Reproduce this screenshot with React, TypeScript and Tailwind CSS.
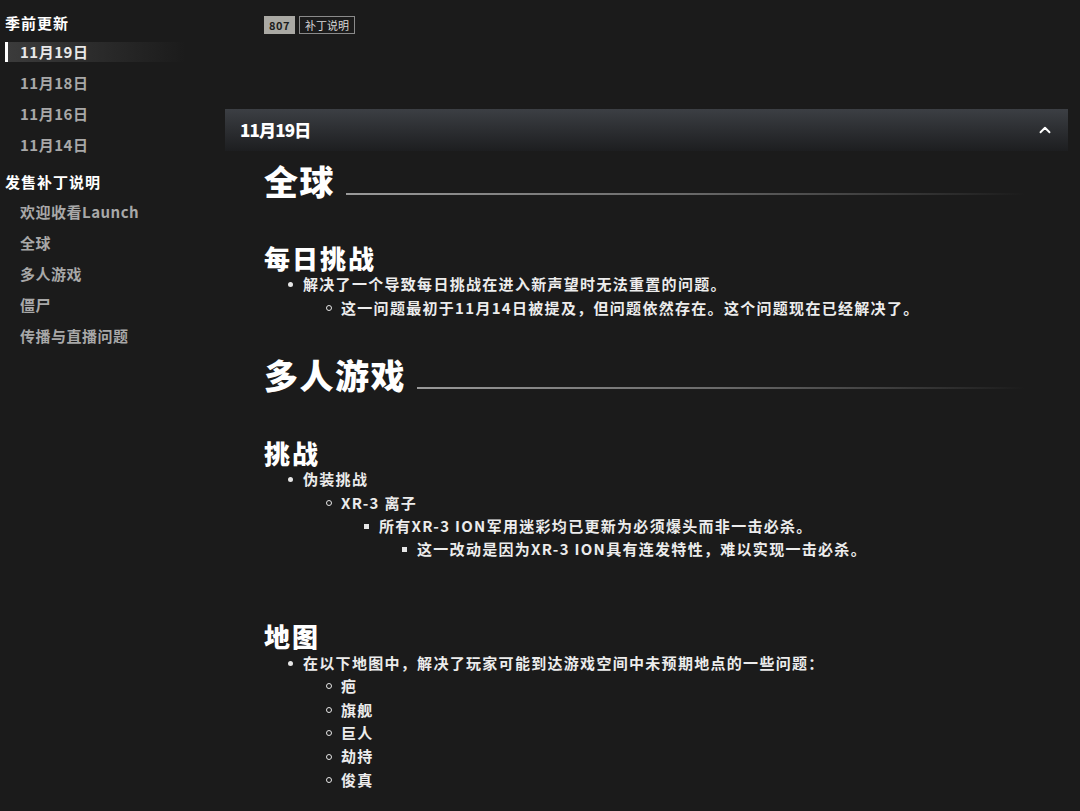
import React from "react";
import { ChevronUp } from "lucide-react";

const font = { fontFamily: '"Noto Sans CJK SC", "Noto Sans", sans-serif' };

const seasonDates = ["11月19日", "11月18日", "11月16日", "11月14日"];
const launchLinks = ["欢迎收看Launch", "全球", "多人游戏", "僵尸", "传播与直播问题"];

const Bullet = ({ kind }: { kind: "disc" | "circle" | "square" }) => {
  if (kind === "disc")
    return <span className="inline-block w-[5px] h-[5px] rounded-full bg-[#e6e6e6]" />;
  if (kind === "circle")
    return <span className="inline-block w-[6px] h-[6px] rounded-full border border-[#e6e6e6]" />;
  return <span className="inline-block w-[5px] h-[5px] bg-[#e6e6e6]" />;
};

const Item = ({
  indent,
  kind,
  children,
}: {
  indent: number;
  kind: "disc" | "circle" | "square";
  children: React.ReactNode;
}) => (
  <div className="flex items-center h-[23.4px]" style={{ paddingLeft: indent }}>
    <span className="w-[15px] flex items-center">
      <Bullet kind={kind} />
    </span>
    <span className="text-[15px] tracking-[1.3px] font-semibold text-[#ececec] whitespace-nowrap">
      {children}
    </span>
  </div>
);

const SectionTitle = ({ title }: { title: string }) => (
  <div className="flex items-end gap-[11px]">
    <h1 className="text-[34px] leading-[40px] font-black text-white tracking-[1.5px]">{title}</h1>
    <div className="flex-1 mr-[55px] mb-[6px] h-[2px] bg-gradient-to-r from-[#9a9a9a] via-[#6a6a6a] to-transparent" />
  </div>
);

const SubTitle = ({ title }: { title: string }) => (
  <h2 className="text-[26px] leading-[30px] font-black text-white tracking-[2px]">{title}</h2>
);

export default function App() {
  return (
    <div className="flex w-full h-[811px] bg-[#1b1b1b] overflow-hidden" style={font}>
      {/* side navigation */}
      <aside className="w-[225px] shrink-0 pt-[12px]">
        <div className="pl-[5px] text-[15px] leading-[22px] font-bold text-white tracking-[1px]">
          季前更新
        </div>
        <ul className="mt-[8px]">
          {seasonDates.map((d, i) => (
            <li
              key={d}
              className={
                i === 0
                  ? "flex items-center h-[20px] mb-[11px] ml-[5px] w-[180px] border-l-[3px] border-white bg-gradient-to-r from-[#3b3b3b] to-transparent"
                  : "flex items-center h-[20px] mb-[11px] ml-[5px] pl-[3px]"
              }
            >
              <span
                className={
                  i === 0
                    ? "pl-[12px] text-[15px] font-bold tracking-[0.5px] text-[#e8e8e8]"
                    : "pl-[12px] text-[15px] font-bold tracking-[0.5px] text-[#a8a8a8]"
                }
              >
                {d}
              </span>
            </li>
          ))}
        </ul>
        <div className="pl-[5px] mt-[16px] text-[15px] leading-[22px] font-bold text-white tracking-[1px]">
          发售补丁说明
        </div>
        <ul className="mt-[9px]">
          {launchLinks.map((l) => (
            <li key={l} className="h-[20px] mb-[11px] pl-[20px] flex items-center">
              <span className="text-[15px] font-bold tracking-[0.5px] text-[#a8a8a8]">{l}</span>
            </li>
          ))}
        </ul>
      </aside>

      {/* main column */}
      <main className="flex-1 min-w-0">
        <div className="flex items-center gap-[4px] pl-[39px] pt-[16px]">
          <span className="h-[18px] w-[31px] justify-center flex items-center bg-[#aaa9a4] text-[#1b1b1b] text-[11px] font-bold tracking-wider">
            807
          </span>
          <span className="h-[18px] w-[56px] justify-center flex items-center border border-[#8a8a8a] text-[#d8d8d8] text-[11px]">
            补丁说明
          </span>
        </div>

        <div className="mt-[75px] mr-[12px] h-[42px] flex items-center justify-between pl-[15px] pr-[14px] bg-gradient-to-b from-[#3c3f44] to-[#1d1e20]">
          <span className="text-[17px] font-black text-white tracking-tighter">11月19日</span>
          <ChevronUp className="w-[18px] h-[18px] text-white" strokeWidth={2.5} />
        </div>

        <div className="pl-[39px] pt-[10px]">
          <SectionTitle title="全球" />

          <div className="mt-[42px]">
            <SubTitle title="每日挑战" />
            <Item indent={24} kind="disc">解决了一个导致每日挑战在进入新声望时无法重置的问题。</Item>
            <Item indent={62} kind="circle">
              这一问题最初于11月14日被提及，但问题依然存在。这个问题现在已经解决了。
            </Item>
          </div>

          <div className="mt-[35px]">
            <SectionTitle title="多人游戏" />
          </div>

          <div className="mt-[43px]">
            <SubTitle title="挑战" />
            <Item indent={24} kind="disc">伪装挑战</Item>
            <Item indent={62} kind="circle">XR-3 离子</Item>
            <Item indent={100} kind="square">所有XR-3 ION军用迷彩均已更新为必须爆头而非一击必杀。</Item>
            <Item indent={138} kind="square">这一改动是因为XR-3 ION具有连发特性，难以实现一击必杀。</Item>
          </div>

          <div className="mt-[60px]">
            <SubTitle title="地图" />
            <Item indent={24} kind="disc">在以下地图中，解决了玩家可能到达游戏空间中未预期地点的一些问题：</Item>
            <Item indent={62} kind="circle">疤</Item>
            <Item indent={62} kind="circle">旗舰</Item>
            <Item indent={62} kind="circle">巨人</Item>
            <Item indent={62} kind="circle">劫持</Item>
            <Item indent={62} kind="circle">俊真</Item>
          </div>
        </div>
      </main>
    </div>
  );
}
